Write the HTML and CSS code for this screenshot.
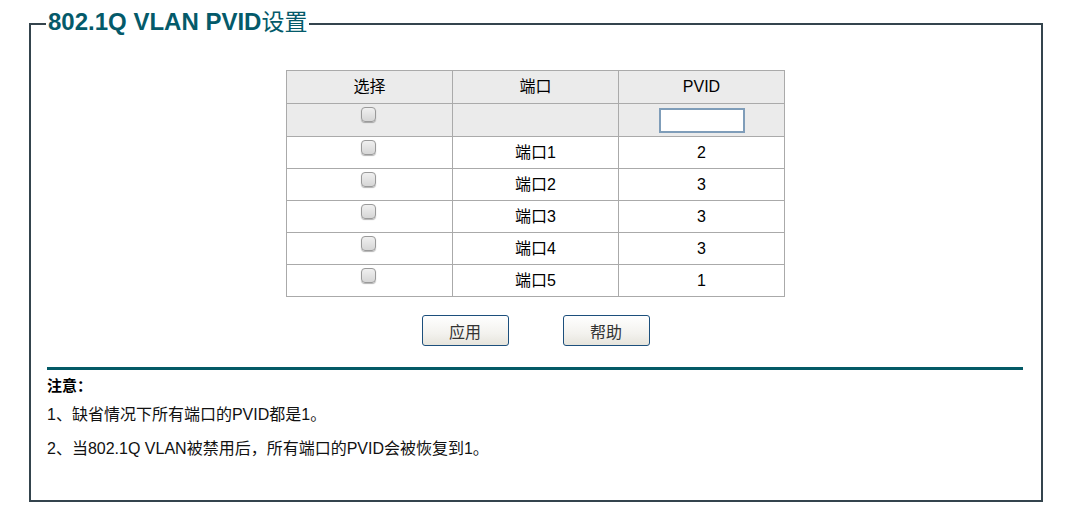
FILE: index.html
```html
<!DOCTYPE html>
<html lang="zh-CN">
<head>
<meta charset="utf-8">
<title>802.1Q VLAN PVID设置</title>
<link rel="stylesheet" href="styles.css">
</head>
<body>
<fieldset class="panel">
  <legend class="panel-title">802.1Q VLAN PVID<span class="title-cjk">设置</span></legend>
  <div class="table-wrap">
  <table class="pvid-table">
    <colgroup><col class="c1"><col class="c2"><col class="c3"></colgroup>
    <thead>
      <tr class="head-row">
        <th>选择</th><th>端口</th><th>PVID</th>
      </tr>
      <tr class="all-row">
        <td class="sel"><input type="checkbox" class="chk"></td>
        <td></td>
        <td><input type="text" class="pvid-input"></td>
      </tr>
    </thead>
    <tbody>
      <tr><td class="sel"><input type="checkbox" class="chk"></td><td>端口1</td><td>2</td></tr>
      <tr><td class="sel"><input type="checkbox" class="chk"></td><td>端口2</td><td>3</td></tr>
      <tr><td class="sel"><input type="checkbox" class="chk"></td><td>端口3</td><td>3</td></tr>
      <tr><td class="sel"><input type="checkbox" class="chk"></td><td>端口4</td><td>3</td></tr>
      <tr><td class="sel"><input type="checkbox" class="chk"></td><td>端口5</td><td>1</td></tr>
    </tbody>
  </table>
  </div>
  <div class="actions">
    <button class="btn" type="button">应用</button>
    <button class="btn" type="button">帮助</button>
  </div>
  <hr class="divider">
  <div class="notes">
    <div class="notes-title">注意：</div>
    <p class="note">1、缺省情况下所有端口的PVID都是1。</p>
    <p class="note">2、当802.1Q VLAN被禁用后，所有端口的PVID会被恢复到1。</p>
  </div>
</fieldset>
</body>
</html>
```

FILE: styles.css
```css
html, body {
  margin: 0;
  padding: 0;
  background: #ffffff;
}

body {
  font-family: "Liberation Sans", Arial, "Noto Sans CJK SC", sans-serif;
  font-size: 16px;
  color: #000;
}

.panel {
  box-sizing: border-box;
  width: 1014px;
  height: 492px;
  margin: 10px 0 0 29px;
  padding: 33px 18px 0 15px;
  border: 2px solid #34444d;
  min-width: 0;
}

.panel-title {
  padding: 0 2px 3px 2px;
  font-size: 24px;
  line-height: 24px;
  font-weight: bold;
  color: #045a6a;
}

.title-cjk {
  font-weight: normal;
  font-size: 23px;
}

.table-wrap {
  padding-left: 2px;
}

.pvid-table {
  width: 499px;
  margin: 0 auto;
  border-collapse: collapse;
  table-layout: fixed;
  border: 1px solid #aaaaaa;
}

.pvid-table col { width: 166px; }

.pvid-table th,
.pvid-table td {
  border: 1px solid #aaaaaa;
  padding: 0;
  text-align: center;
  vertical-align: middle;
  font-weight: normal;
  line-height: 20px;
  height: 31px;
}

.head-row th,
.all-row td {
  background: #ebebeb;
  height: 32px;
}

.pvid-table td.sel {
  vertical-align: top;
  padding-top: 3px;
  height: 28px;
}

.all-row td.sel { height: 29px; }

.chk {
  appearance: none;
  -webkit-appearance: none;
  display: block;
  box-sizing: border-box;
  width: 15px;
  height: 15px;
  margin: 0 auto;
  position: relative;
  left: -1px;
  border: 1px solid #9a9a9a;
  border-radius: 4px;
  background: linear-gradient(#f0f0f0, #d6d6d6);
  box-shadow: 0 1px 1px rgba(0, 0, 0, 0.3);
}

.pvid-input {
  display: block;
  box-sizing: border-box;
  width: 86px;
  height: 25px;
  margin: 0 auto;
  border: 2px solid #7f9db9;
  background: #fff;
  padding: 0 3px;
  font: inherit;
}

.actions {
  display: flex;
  justify-content: center;
  gap: 54px;
  margin-top: 18px;
  padding-left: 2px;
}

.btn {
  box-sizing: border-box;
  width: 87px;
  height: 31px;
  padding: 0;
  border: 1px solid #1c4f7c;
  border-radius: 3px;
  background: linear-gradient(#ffffff, #f3f2ee 60%, #e6e4dc);
  font-family: "Noto Sans CJK SC", sans-serif;
  font-size: 16px;
  color: #333;
}

.divider {
  margin: 21px 0 0 1px;
  height: 3px;
  border: 0;
  background: #035a66;
}

.notes {
  padding-left: 1px;
  display: flex;
  flex-direction: column;
}

.notes-title {
  margin-top: 5px;
  height: 20px;
  line-height: 20px;
  font-family: "Noto Sans CJK SC", serif;
  font-weight: bold;
  font-size: 15px;
}

.note {
  margin: 0;
  height: 34px;
  line-height: 34px;
  font-size: 16px;
  color: #111;
  white-space: nowrap;
}

.note:first-of-type { margin-top: 3px; }
```
